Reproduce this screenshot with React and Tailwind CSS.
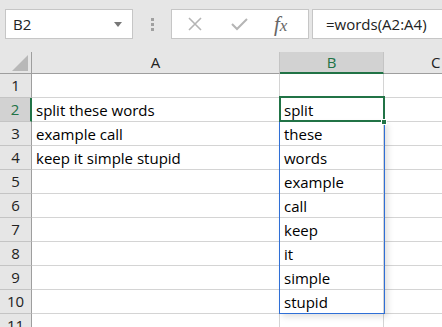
import React from "react";

const font = { fontFamily: '"Open Sans", "Liberation Sans", sans-serif' };

const rows = [
  { n: 1, a: "", b: "" },
  { n: 2, a: "split these words", b: "split" },
  { n: 3, a: "example call", b: "these" },
  { n: 4, a: "keep it simple stupid", b: "words" },
  { n: 5, a: "", b: "example" },
  { n: 6, a: "", b: "call" },
  { n: 7, a: "", b: "keep" },
  { n: 8, a: "", b: "it" },
  { n: 9, a: "", b: "simple" },
  { n: 10, a: "", b: "stupid" },
  { n: 11, a: "", b: "" },
];

function FormulaBar() {
  return (
    <div className="h-[52px] bg-[#e6e6e6] flex items-start pt-[9px] pl-[5px]">
      <div className="w-[128px] h-[30px] bg-white border border-[#c6c6c6] flex items-center pl-[7px] pr-[10px] justify-between">
        <span className="text-[15px] text-[#222]">B2</span>
        <svg width="8" height="5" viewBox="0 0 8 5">
          <path d="M0 0h8L4 5z" fill="#777" />
        </svg>
      </div>
      <div className="w-[38px] h-[30px] flex flex-col items-center justify-center gap-[2px]">
        <div className="w-[3px] h-[3px] bg-[#a0a0a0]" />
        <div className="w-[3px] h-[3px] bg-[#a0a0a0]" />
        <div className="w-[3px] h-[3px] bg-[#a0a0a0]" />
      </div>
      <div className="w-[138px] h-[30px] bg-white border border-[#c6c6c6] flex items-center">
        <svg width="16" height="16" viewBox="0 0 16 16" className="ml-[15px]">
          <path d="M2 2L14 14M14 2L2 14" stroke="#b5b5b5" strokeWidth="1.6" fill="none" />
        </svg>
        <svg width="17" height="14" viewBox="0 0 17 14" className="ml-[28px]">
          <path d="M1 7L6 12L16 2" stroke="#b5b5b5" strokeWidth="2" fill="none" />
        </svg>
        <span
          className="ml-[26px] text-[21px] leading-none italic text-[#666]"
          style={{ fontFamily: '"Liberation Serif", serif' }}
        >
          f<span className="text-[17px]">x</span>
        </span>
      </div>
      <div className="ml-[3px] flex-1 h-[30px] bg-white border border-[#c6c6c6] border-r-0 flex items-center pl-[13px]">
        <span className="text-[15px] text-[#222]">=words(A2:A4)</span>
      </div>
    </div>
  );
}

function HeaderRow() {
  return (
    <div className="flex h-[22px]">
      <div className="w-[32px] shrink-0 bg-[#e6e6e6] border-r border-b border-[#9e9e9e] relative">
        <svg width="16" height="16" viewBox="0 0 16 16" className="absolute right-[3px] bottom-[2px]">
          <path d="M16 0V16H0z" fill="#b8b8b8" />
        </svg>
      </div>
      <div className="w-[248px] shrink-0 bg-[#e6e6e6] border-r border-b border-[#c4c4c4] border-b-[#9e9e9e] flex items-center justify-center text-[15px] text-[#222]">
        A
      </div>
      <div className="w-[104px] shrink-0 bg-[#d2d2d2] border-r border-[#c4c4c4] border-b-2 border-b-[#217346] flex items-center justify-center text-[15px] text-[#217346]">
        B
      </div>
      <div className="flex-1 bg-[#e6e6e6] border-b border-[#9e9e9e] flex items-center pl-[47px] text-[15px] text-[#222]">
        C
      </div>
    </div>
  );
}

function Row({ r }) {
  const sel = r.n === 2;
  return (
    <div className="flex h-[24px]">
      <div
        className={
          sel
            ? "w-[32px] shrink-0 bg-[#d2d2d2] border-r-2 border-r-[#217346] border-b border-b-[#c4c4c4] flex items-center justify-center text-[15px] text-[#217346]"
            : "w-[32px] shrink-0 bg-[#e6e6e6] border-r border-r-[#9e9e9e] border-b border-b-[#c4c4c4] flex items-center justify-center text-[15px] text-[#222]"
        }
      >
        {r.n}
      </div>
      <div className="w-[248px] shrink-0 bg-white border-r border-b border-[#d4d4d4] flex items-center pl-[4px] pt-[2px] text-[15px] text-black">
        {r.a}
      </div>
      <div className="w-[104px] shrink-0 bg-white border-r border-b border-[#d4d4d4] flex items-center pl-[4px] pt-[2px] text-[15px] text-black">
        {r.b}
      </div>
      <div className="flex-1 bg-white border-b border-[#d4d4d4]" />
    </div>
  );
}

export default function App() {
  return (
    <div className="w-[442px] h-[327px] overflow-hidden bg-white relative" style={font}>
      <FormulaBar />
      <HeaderRow />
      <div className="relative">
        {rows.map((r) => (
          <Row key={r.n} r={r} />
        ))}
        {/* spill range */}
        <div className="absolute left-[279px] top-[47px] w-[106px] h-[193px] border border-[#2f6fd6] shadow-[3px_3px_6px_rgba(0,0,0,0.12)] pointer-events-none" />
        {/* active cell */}
        <div className="absolute left-[279px] top-[22px] w-[106px] h-[26px] border-2 border-[#217346] pointer-events-none" />
        <div className="absolute left-[381px] top-[45px] w-[6px] h-[6px] bg-[#217346] border border-white pointer-events-none" />
      </div>
    </div>
  );
}
